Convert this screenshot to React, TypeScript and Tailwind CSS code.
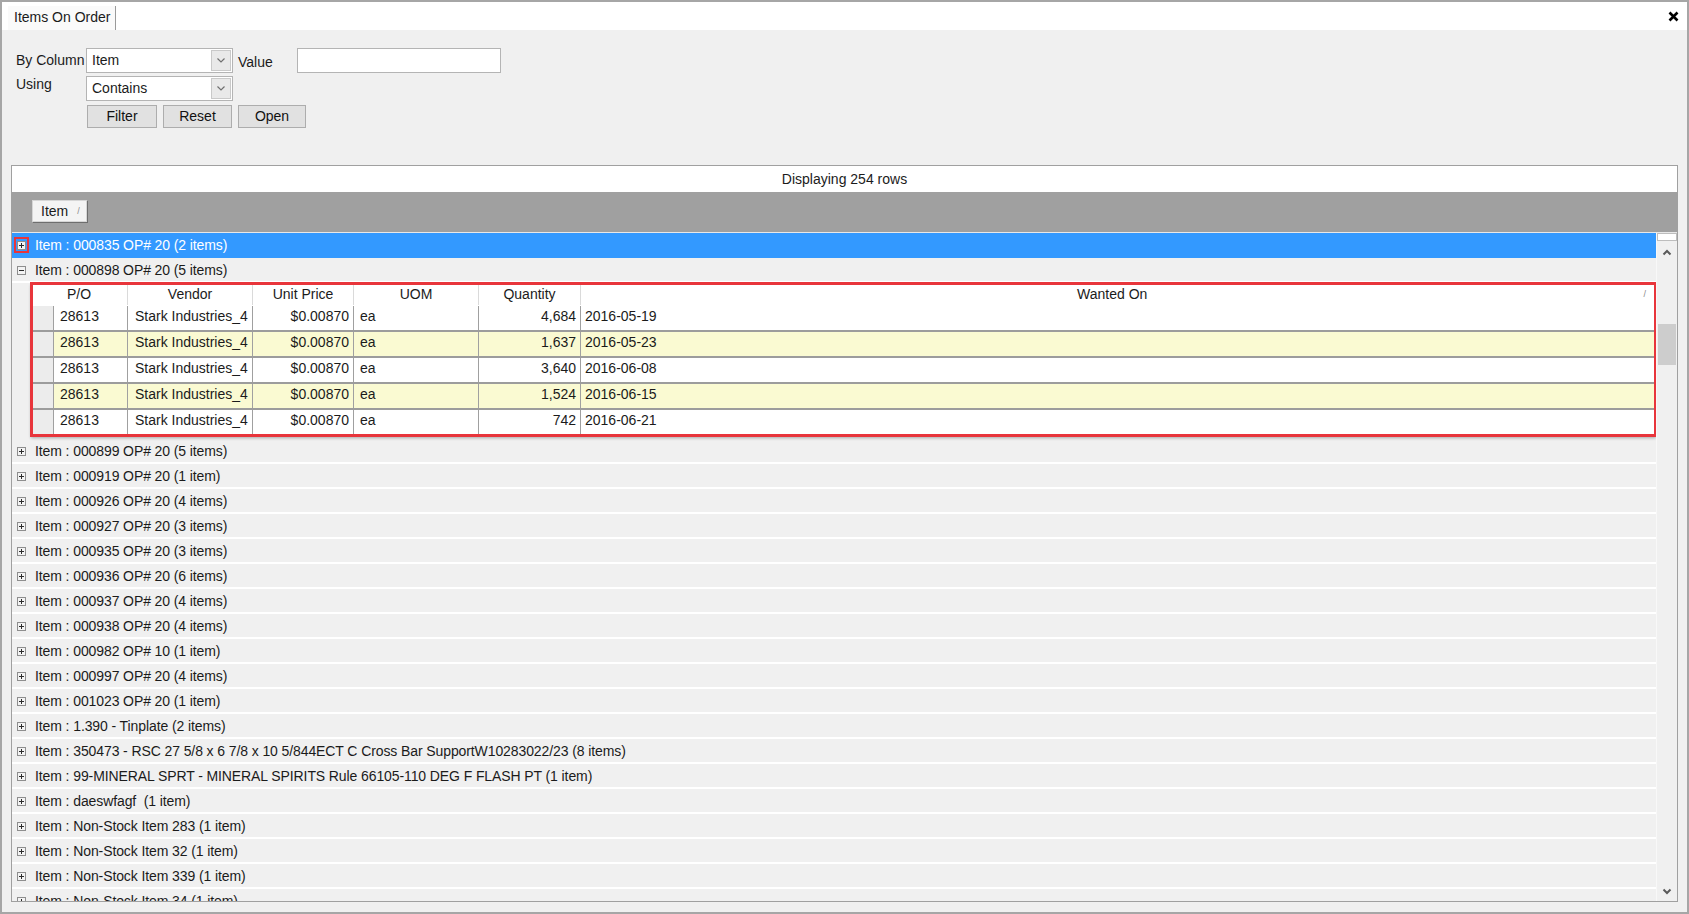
import React from "react";

interface DetailRow {
  po: string;
  vendor: string;
  price: string;
  uom: string;
  qty: string;
  date: string;
}

const details: DetailRow[] = [
  { po: "28613", vendor: "Stark Industries_4", price: "$0.00870", uom: "ea", qty: "4,684", date: "2016-05-19" },
  { po: "28613", vendor: "Stark Industries_4", price: "$0.00870", uom: "ea", qty: "1,637", date: "2016-05-23" },
  { po: "28613", vendor: "Stark Industries_4", price: "$0.00870", uom: "ea", qty: "3,640", date: "2016-06-08" },
  { po: "28613", vendor: "Stark Industries_4", price: "$0.00870", uom: "ea", qty: "1,524", date: "2016-06-15" },
  { po: "28613", vendor: "Stark Industries_4", price: "$0.00870", uom: "ea", qty: "742", date: "2016-06-21" },
];

const groups: string[] = [
  "Item : 000899 OP# 20 (5 items)",
  "Item : 000919 OP# 20 (1 item)",
  "Item : 000926 OP# 20 (4 items)",
  "Item : 000927 OP# 20 (3 items)",
  "Item : 000935 OP# 20 (3 items)",
  "Item : 000936 OP# 20 (6 items)",
  "Item : 000937 OP# 20 (4 items)",
  "Item : 000938 OP# 20 (4 items)",
  "Item : 000982 OP# 10 (1 item)",
  "Item : 000997 OP# 20 (4 items)",
  "Item : 001023 OP# 20 (1 item)",
  "Item : 1.390 - Tinplate (2 items)",
  "Item : 350473 - RSC 27 5/8 x 6 7/8 x 10 5/844ECT C Cross Bar SupportW10283022/23 (8 items)",
  "Item : 99-MINERAL SPRT - MINERAL SPIRITS Rule 66105-110 DEG F FLASH PT (1 item)",
  "Item : daeswfagf\u00a0 (1 item)",
  "Item : Non-Stock Item 283 (1 item)",
  "Item : Non-Stock Item 32 (1 item)",
  "Item : Non-Stock Item 339 (1 item)",
  "Item : Non-Stock Item 34 (1 item)",
];

const ExpandIcon: React.FC<{ open?: boolean }> = ({ open }) => (
  <svg width="9" height="9" viewBox="0 0 9 9">
    <rect x="0.5" y="0.5" width="8" height="8" fill="#f3f3f3" stroke="#8e8e8e" />
    <path d={open ? "M2 4.5h5" : "M2 4.5h5M4.5 2v5"} stroke="#2b2b2b" />
  </svg>
);

const Chevron: React.FC<{ down?: boolean; color?: string; w?: number }> = ({ down, color = "#5a5a5a", w = 2 }) => (
  <svg width="10" height="7" viewBox="0 0 10 7">
    <path d={down ? "M1.5 1.5L5 5L8.5 1.5" : "M1.5 5.5L5 2L8.5 5.5"} fill="none" stroke={color} strokeWidth={w} />
  </svg>
);

const GroupRow: React.FC<{ label: string; open?: boolean; selected?: boolean }> = ({ label, open, selected }) => (
  <div
    className={
      "flex h-[25px] shrink-0 items-center whitespace-nowrap border-b-2 pt-[1px] tracking-[-0.1px] " +
      (selected ? "bg-[#3399ff] border-[#3399ff] text-white" : "border-white text-[#1b1b1b]")
    }
  >
    <span
      className={
        "ml-[2px] flex h-[16px] w-[15px] items-center justify-center border-2 " +
        (selected ? "border-[#e8353b]" : "border-transparent")
      }
    >
      <ExpandIcon open={open} />
    </span>
    <span className="ml-[6px]">{label}</span>
  </div>
);

const ComboBox: React.FC<{ value: string }> = ({ value }) => (
  <div className="flex h-[25px] w-[147px] items-center border border-[#b4b4b4] bg-white">
    <span className="flex-1 pl-[5px]">{value}</span>
    <span className="mr-[1px] flex h-[21px] w-[20px] items-center justify-center border border-[#c9c9c9] bg-[#e9e9e9]">
      <Chevron down color="#707070" w={1.2} />
    </span>
  </div>
);

const Button: React.FC<{ label: string; w: string }> = ({ label, w }) => (
  <button className={"h-[23px] border border-[#adadad] bg-[#e1e1e1] text-[14px] text-[#111] " + w}>{label}</button>
);

const App: React.FC = () => {
  return (
    <div className="flex h-[914px] w-[1689px] flex-col overflow-hidden border-2 border-[#a6a6a6] bg-[#f0f0f0] font-['Liberation_Sans',Arial,sans-serif] text-[14px] text-[#1b1b1b]">
      {/* title strip */}
      <div className="flex h-[28px] shrink-0 items-end bg-white">
        <div className="ml-[6px] flex h-[24px] w-[108px] items-center border-r border-[#9a9a9a] bg-[#fafafa] pb-[1px] pl-[6px]">
          Items On Order
        </div>
        <div className="flex-1" />
        <div className="mb-[8px] mr-[8px]">
          <svg width="11" height="11" viewBox="0 0 11 11">
            <path d="M1.5 1.5L9.5 9.5M9.5 1.5L1.5 9.5" stroke="#000" strokeWidth="2.6" />
          </svg>
        </div>
      </div>

      {/* filter panel */}
      <div className="flex shrink-0 flex-col gap-[3px] pl-[14px] pt-[18px]">
        <div className="flex items-center">
          <span className="w-[70px]">By Column</span>
          <ComboBox value="Item" />
          <span className="ml-[5px] w-[59px] pt-[4px]">Value</span>
          <div className="h-[25px] w-[204px] border border-[#b4b4b4] bg-white" />
        </div>
        <div className="flex items-start">
          <span className="w-[70px] -mt-[2px]">Using</span>
          <ComboBox value="Contains" />
        </div>
        <div className="ml-[71px] mt-[1px] flex gap-[6px]">
          <Button label="Filter" w="w-[70px]" />
          <Button label="Reset" w="w-[69px]" />
          <Button label="Open" w="w-[68px]" />
        </div>
      </div>

      {/* grid */}
      <div className="mx-[9px] mb-[10px] mt-[37px] flex min-h-0 flex-1 flex-col border border-[#a0a0a0] bg-[#f0f0f0]">
        <div className="flex h-[26px] shrink-0 items-center justify-center bg-white">Displaying 254 rows</div>
        <div className="flex h-[40px] shrink-0 items-start bg-[#a0a0a0] pl-[20px] pt-[8px]">
          <div className="flex h-[22px] w-[55px] items-center border border-[#d6d6d6] bg-[#f4f4f4] pl-[8px] pt-[1px] shadow-[1px_1px_0_#6e6e6e]">
            <span>Item</span>
            <span className="ml-[9px] text-[9px] text-[#8a8a8a]">/</span>
          </div>
        </div>

        <div className="flex min-h-0 flex-1 border-t border-[#e8e8e8]">
          <div className="flex min-w-0 flex-1 flex-col overflow-hidden">
            <GroupRow label="Item : 000835 OP# 20 (2 items)" selected />
            <GroupRow label="Item : 000898 OP# 20 (5 items)" open />

            {/* expanded detail table */}
            <div className="mb-[3px] ml-[19px] shrink-0 bg-white outline-[3px] -outline-offset-2 outline-[#e8353b] shadow-[0_2px_3px_rgba(0,0,0,0.3)]">
              <div className="grid h-[23px] grid-cols-[97px_125px_101px_125px_102px_1fr] items-center text-center">
                <span className="border-r border-[#dadada]">P/O</span>
                <span className="border-r border-[#dadada]">Vendor</span>
                <span className="border-r border-[#dadada]">Unit Price</span>
                <span className="border-r border-[#dadada]">UOM</span>
                <span className="border-r border-[#dadada]">Quantity</span>
                <span className="flex items-center">
                  <span className="flex-1">Wanted On</span>
                  <span className="pr-[10px] text-[9px] text-[#8a8a8a]">/</span>
                </span>
              </div>
              {details.map((r, i) => (
                <div
                  key={i}
                  className={
                    "grid h-[26px] grid-cols-[23px_74px_125px_101px_125px_102px_1fr] " +
                    (i < details.length - 1 ? "border-b-2 border-[#9c9c9c] " : "") +
                    (i % 2 === 1 ? "bg-[#fafad2]" : "bg-white")
                  }
                >
                  <span className="border-r border-[#a0a0a0] bg-[#ececec]" />
                  <span className="border-r border-[#a0a0a0] pl-[6px]">{r.po}</span>
                  <span className="border-r border-[#a0a0a0] pl-[7px]">{r.vendor}</span>
                  <span className="border-r border-[#a0a0a0] pr-[4px] text-right">{r.price}</span>
                  <span className="border-r border-[#a0a0a0] pl-[6px]">{r.uom}</span>
                  <span className="border-r border-[#a0a0a0] pr-[4px] text-right">{r.qty}</span>
                  <span className="pl-[4px]">{r.date}</span>
                </div>
              ))}
            </div>

            {groups.map((g, i) => (
              <GroupRow key={i} label={g} />
            ))}
          </div>

          {/* vertical scrollbar */}
          <div className="flex w-[21px] shrink-0 flex-col border-l border-[#f8f8f8] bg-[#f0f0f0]">
            <div className="h-[8px] border border-[#bdbdbd] bg-white" />
            <div className="flex h-[22px] items-center justify-center">
              <Chevron />
            </div>
            <div className="h-[61px]" />
            <div className="mx-[1px] h-[41px] bg-[#cdcdcd]" />
            <div className="flex-1" />
            <div className="flex h-[20px] items-center justify-center">
              <Chevron down />
            </div>
          </div>
        </div>
      </div>
    </div>
  );
};

export default App;
